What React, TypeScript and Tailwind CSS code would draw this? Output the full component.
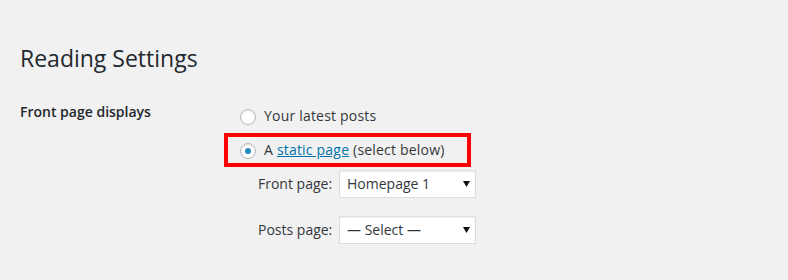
import React from 'react';

function Radio({ checked }: { checked?: boolean }) {
    return (
        <span className="mt-[2px] flex h-[16px] w-[16px] shrink-0 items-center justify-center rounded-full border border-[#b4b9be] bg-white shadow-[inset_0_1px_2px_rgba(0,0,0,0.1)]">
            {checked && <span className="h-[6px] w-[6px] rounded-full bg-[#1e8cbe]" />}
        </span>
    );
}

function FakeSelect({ value }: { value: string }) {
    return (
        <div className="flex h-[28px] w-[137px] items-center justify-between border border-[#ddd] bg-white pl-[7px] pr-[5px] shadow-[inset_0_1px_2px_rgba(0,0,0,0.07)]">
            <span>{value}</span>
            <svg width="7" height="6" viewBox="0 0 7 6">
                <polygon points="0,0 7,0 3.5,6" fill="#111" />
            </svg>
        </div>
    );
}

export default function App() {
    return (
        <div className="min-h-[280px] w-[788px] bg-[#f1f1f1] pl-[20px] pt-[44px] font-['Open_Sans',sans-serif] text-[14px] leading-[20px] text-[#32373c]">
            <h1 className="text-[23px] font-normal leading-[29px] text-[#23282d]">Reading Settings</h1>

            <div className="mt-[29px] flex">
                <div className="w-[220px] font-semibold text-[#23282d]">Front page displays</div>

                <div className="pt-[2px]">
                    <div className="flex h-[24px] items-center gap-[8px]">
                        <Radio />
                        <span className="tracking-[0.2px]">Your latest posts</span>
                    </div>

                    <div className="-ml-[16px] mt-[5px] w-[247px] border-[4px] border-[#ff0000] pl-[12px]">
                        <div className="flex h-[26px] items-center gap-[8px]">
                            <Radio checked />
                            <span className="tracking-[0.2px]">
                                A <a className="text-[#0073aa] underline">static page</a> (select below)
                            </span>
                        </div>
                    </div>

                    <div className="ml-[18px] mt-[3px] flex flex-col gap-[18px]">
                        <div className="flex items-center">
                            <span className="w-[81px]">Front page:</span>
                            <FakeSelect value="Homepage 1" />
                        </div>
                        <div className="flex items-center">
                            <span className="w-[81px]">Posts page:</span>
                            <FakeSelect value="— Select —" />
                        </div>
                    </div>
                </div>
            </div>
        </div>
    );
}
